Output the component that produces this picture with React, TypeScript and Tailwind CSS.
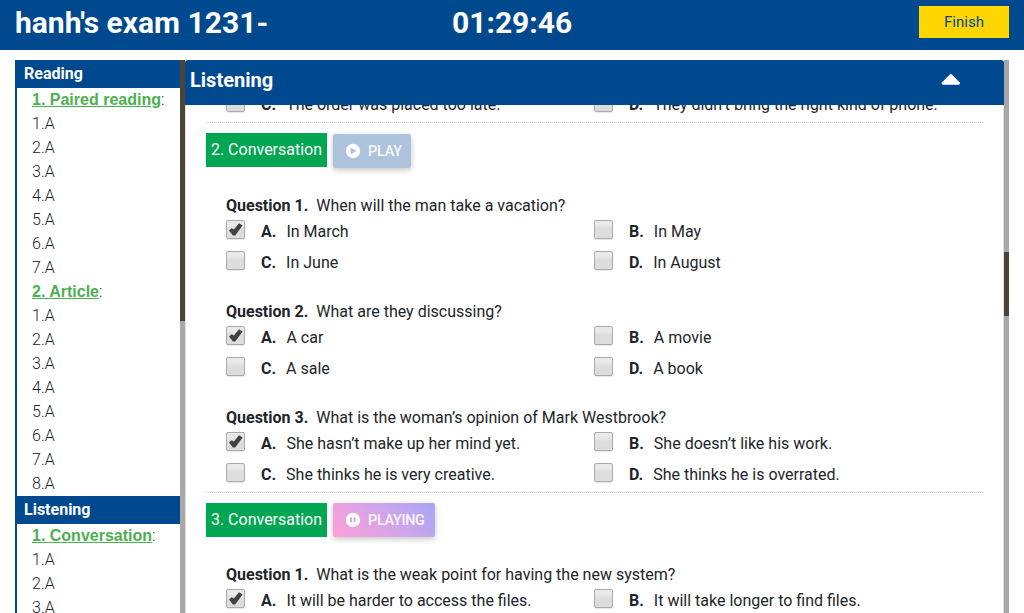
type Option = { letter: string; text: string; checked?: boolean };

const navigation = [
  {
    title: "Reading",
    parts: [
      { name: "1. Paired reading", count: 7 },
      { name: "2. Article", count: 8 },
    ],
  },
  { title: "Listening", parts: [{ name: "1. Conversation", count: 3 }] },
];

const conversationTwo: { prompt: string; options: Option[] }[] = [
  {
    prompt: "When will the man take a vacation?",
    options: [
      { letter: "A", text: "In March", checked: true },
      { letter: "B", text: "In May" },
      { letter: "C", text: "In June" },
      { letter: "D", text: "In August" },
    ],
  },
  {
    prompt: "What are they discussing?",
    options: [
      { letter: "A", text: "A car", checked: true },
      { letter: "B", text: "A movie" },
      { letter: "C", text: "A sale" },
      { letter: "D", text: "A book" },
    ],
  },
  {
    prompt: "What is the woman’s opinion of Mark Westbrook?",
    options: [
      { letter: "A", text: "She hasn’t make up her mind yet.", checked: true },
      { letter: "B", text: "She doesn’t like his work." },
      { letter: "C", text: "She thinks he is very creative." },
      { letter: "D", text: "She thinks he is overrated." },
    ],
  },
];

const conversationThree: { prompt: string; options: Option[] }[] = [
  {
    prompt: "What is the weak point for having the new system?",
    options: [
      { letter: "A", text: "It will be harder to access the files.", checked: true },
      { letter: "B", text: "It will take longer to find files." },
    ],
  },
];

function Checkbox({ checked }: { checked?: boolean }) {
  return (
    <span className="mt-[3px] flex h-[19px] w-[19px] shrink-0 items-center justify-center rounded-[2px] border border-[#ababab] bg-linear-to-b from-[#eaeaea] from-20% to-[#dddddd] to-50% shadow-[0_1px_1px_rgba(0,0,0,0.1)]">
      {checked && (
        <svg viewBox="0 0 17 17" className="h-[17px] w-[17px] shrink-0" fill="#414141">
          <path d="M2 9.4 4.6 7.2 6.9 8.5 12 2.2 15.6 4.6 8.2 14.4H5.9Z" />
        </svg>
      )}
    </span>
  );
}

function Options({ options }: { options: Option[] }) {
  return (
    <div className="grid grid-cols-[368px_1fr]">
      {options.map((o) => (
        <div key={o.letter} className="flex h-[31px] items-start">
          <Checkbox checked={o.checked} />
          <span className="mt-[3px] ml-4 whitespace-pre leading-6">
            <b className="font-bold">{o.letter}.</b>
            <span className="ml-[10px]">{o.text}</span>
          </span>
        </div>
      ))}
    </div>
  );
}

function Question({ index, prompt, options }: { index: number; prompt: string; options: Option[] }) {
  return (
    <div>
      <p className="h-6 leading-[26px]">
        <b className="font-bold">Question {index}.</b>
        <span className="ml-2">{prompt}</span>
      </p>
      <Options options={options} />
    </div>
  );
}

function PlayIcon() {
  return (
    <svg viewBox="0 0 16 16" className="h-4 w-4">
      <circle cx="8" cy="8" r="7.2" fill="white" />
      <path d="M5.6 4.5 11.6 8 5.6 11.5Z" fill="#adc3db" />
    </svg>
  );
}

function PauseIcon() {
  return (
    <svg viewBox="0 0 16 16" className="h-4 w-4">
      <circle cx="8" cy="8" r="7.2" fill="white" />
      <path d="M5.2 5.3h1.9v5H5.2zM8.7 5.3h1.9v5H8.7z" fill="#dda3e0" />
    </svg>
  );
}

function Badge({ children }: { children: string }) {
  return <h3 className="h-[34px] w-[121px] bg-[#00a651] text-center leading-[34px] text-white">{children}</h3>;
}

export default function App() {
  return (
    <div className="flex h-[613px] w-[1024px] flex-col overflow-hidden bg-white text-[16px] text-[#212529] [font-family:Roboto,'Liberation_Sans',sans-serif]">
      <header className="grid h-[50px] shrink-0 grid-cols-[437px_467px_90px] bg-[#00498f] pl-[15px] text-white">
        <h1 className="pt-[5px] text-[30px] leading-[36px] font-bold">hanh's exam 1231-</h1>
        <div className="pt-[5px] text-[30px] leading-[36px] font-bold">01:29:46</div>
        <button className="mt-[6px] h-8 bg-[#ffd600] text-[15px] text-[#00498f]">Finish</button>
      </header>

      <div className="flex min-h-0 flex-1 pt-[10px] pl-[15px]">
        <aside className="flex w-[170px] shrink-0 overflow-hidden">
          <nav className="h-full flex-1 border-l-2 border-[#00498f]">
            {navigation.map((section) => (
              <div key={section.title}>
                <h2 className="h-7 bg-[#00498f] pl-[7px] leading-7 font-bold text-white">{section.title}</h2>
                {section.parts.map((part) => (
                  <div key={part.name} className="pl-[15px] leading-6 font-light">
                    <div className="h-6">
                      <a className="font-bold text-[#4caf50] underline [font-family:'Liberation_Sans',sans-serif]">{part.name}</a>:
                    </div>
                    {Array.from({ length: part.count }, (_, i) => (
                      <div key={i} className="h-6">{i + 1}.A</div>
                    ))}
                  </div>
                ))}
              </div>
            ))}
          </nav>
          <div className="w-[5px] bg-[#a8a8a8]">
            <div className="h-[261px] bg-[#4b4437]" />
          </div>
        </aside>

        <main className="flex w-[824px] overflow-hidden">
          <section className="flex w-[819px] flex-col overflow-hidden rounded-t-[3px]">
            <div className="flex h-[45px] shrink-0 items-center justify-between bg-[#00498f] pr-[43px] pl-[5px]">
              <h2 className="mt-[-6px] text-[20px] leading-6 font-bold text-white">Listening</h2>
              <svg viewBox="0 0 20 12" className="mt-[-7px] h-3 w-5" fill="white">
                <path d="M9 1.3Q9.8 .5 10.6 1.3L18.8 9.5Q19.4 11.5 18 11.8H1.5Q.2 11.5 .8 9.5Z" />
              </svg>
            </div>
            <div className="min-h-0 flex-1 overflow-hidden border-x border-[#dfdfdf] px-5">
              <div className="mt-[-15px] h-8 pl-5">
                <Options
                  options={[
                    { letter: "C", text: "The order was placed too late." },
                    { letter: "D", text: "They didn’t bring the right kind of phone." },
                  ]}
                />
              </div>
              <section className="h-[370px] border-t border-dotted border-[#c4c4c4] pt-[10px]">
                <div className="flex h-[60px] items-start gap-[6px]">
                  <Badge>2. Conversation</Badge>
                  <button className="mt-px flex h-[34px] w-[78px] items-center gap-[7px] rounded-[2px] bg-[#adc3db] pl-3 text-[14.4px] font-medium text-white/90 shadow-[0_2px_5px_rgba(0,0,0,0.16),0_2px_10px_rgba(0,0,0,0.08)]">
                    <PlayIcon />
                    <span className="pt-[2px] tracking-[-0.2px]">PLAY</span>
                  </button>
                </div>
                <div className="flex flex-col gap-5 pl-5">
                  {conversationTwo.map((q, i) => (
                    <Question key={q.prompt} index={i + 1} {...q} />
                  ))}
                </div>
              </section>
              <section className="border-t border-dotted border-[#c4c4c4] pt-[10px]">
                <div className="flex h-[59px] items-start gap-[6px]">
                  <Badge>3. Conversation</Badge>
                  <button className="flex h-[34px] w-[102px] items-center gap-[7px] rounded-[2px] bg-linear-45 from-[#ff9fd8] to-[#a6a6f8] pl-3 text-[14.4px] font-medium text-white/90 shadow-[0_2px_5px_rgba(0,0,0,0.16),0_2px_10px_rgba(0,0,0,0.08)]">
                    <PauseIcon />
                    <span className="pt-[2px] tracking-[-0.3px]">PLAYING</span>
                  </button>
                </div>
                <div className="pl-5">
                  {conversationThree.map((q, i) => (
                    <Question key={q.prompt} index={i + 1} {...q} />
                  ))}
                </div>
              </section>
            </div>
          </section>
          <div className="w-[5px] bg-[#a8a8a8] pt-[192px]">
            <div className="h-16 bg-[#4b4437]" />
          </div>
        </main>
      </div>
    </div>
  );
}
